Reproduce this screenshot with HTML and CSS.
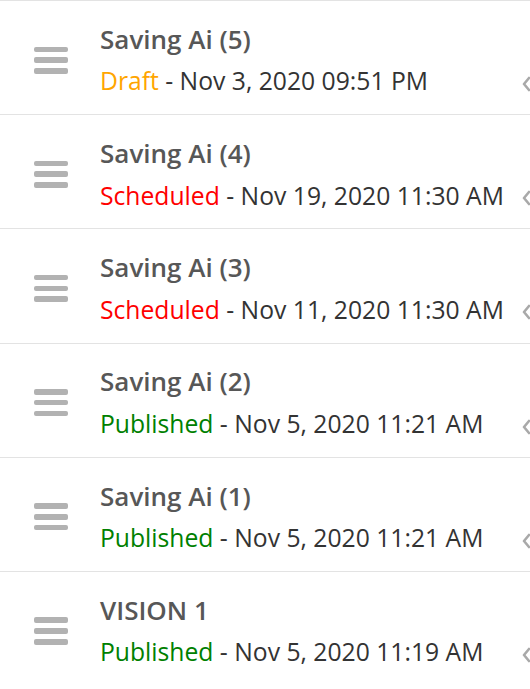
FILE: index.html
```html
<!DOCTYPE html>
<html>
<head>
<meta charset="utf-8">
<link rel="stylesheet" href="styles.css">
</head>
<body>
<ul class="list">
  <li class="row">
    <div class="handle"><span></span><span></span><span></span></div>
    <div class="info">
      <div class="title">Saving Ai (5)</div>
      <div class="meta"><span class="st draft">Draft</span> - Nov 3, 2020 09:51 PM</div>
    </div>
    <svg class="chev" width="12" height="16" viewBox="0 0 12 16"><polyline points="7,2 2,8 7,14" fill="none" stroke="#a9a9a9" stroke-width="2.6" stroke-linecap="round" stroke-linejoin="round"/></svg>
  </li>
  <li class="row">
    <div class="handle"><span></span><span></span><span></span></div>
    <div class="info">
      <div class="title">Saving Ai (4)</div>
      <div class="meta"><span class="st sched">Scheduled</span> - Nov 19, 2020 11:30 AM</div>
    </div>
    <svg class="chev" width="12" height="16" viewBox="0 0 12 16"><polyline points="7,2 2,8 7,14" fill="none" stroke="#a9a9a9" stroke-width="2.6" stroke-linecap="round" stroke-linejoin="round"/></svg>
  </li>
  <li class="row">
    <div class="handle"><span></span><span></span><span></span></div>
    <div class="info">
      <div class="title">Saving Ai (3)</div>
      <div class="meta"><span class="st sched">Scheduled</span> - Nov 11, 2020 11:30 AM</div>
    </div>
    <svg class="chev" width="12" height="16" viewBox="0 0 12 16"><polyline points="7,2 2,8 7,14" fill="none" stroke="#a9a9a9" stroke-width="2.6" stroke-linecap="round" stroke-linejoin="round"/></svg>
  </li>
  <li class="row">
    <div class="handle"><span></span><span></span><span></span></div>
    <div class="info">
      <div class="title">Saving Ai (2)</div>
      <div class="meta"><span class="st pub">Published</span> - Nov 5, 2020 11:21 AM</div>
    </div>
    <svg class="chev" width="12" height="16" viewBox="0 0 12 16"><polyline points="7,2 2,8 7,14" fill="none" stroke="#a9a9a9" stroke-width="2.6" stroke-linecap="round" stroke-linejoin="round"/></svg>
  </li>
  <li class="row">
    <div class="handle"><span></span><span></span><span></span></div>
    <div class="info">
      <div class="title">Saving Ai (1)</div>
      <div class="meta"><span class="st pub">Published</span> - Nov 5, 2020 11:21 AM</div>
    </div>
    <svg class="chev" width="12" height="16" viewBox="0 0 12 16"><polyline points="7,2 2,8 7,14" fill="none" stroke="#a9a9a9" stroke-width="2.6" stroke-linecap="round" stroke-linejoin="round"/></svg>
  </li>
  <li class="row">
    <div class="handle"><span></span><span></span><span></span></div>
    <div class="info">
      <div class="title">VISION 1</div>
      <div class="meta"><span class="st pub">Published</span> - Nov 5, 2020 11:19 AM</div>
    </div>
    <svg class="chev" width="12" height="16" viewBox="0 0 12 16"><polyline points="7,2 2,8 7,14" fill="none" stroke="#a9a9a9" stroke-width="2.6" stroke-linecap="round" stroke-linejoin="round"/></svg>
  </li>
</ul>
</body>
</html>
```
FILE: styles.css
```css
html, body {
  margin: 0;
  padding: 0;
  background: #fff;
  overflow: hidden;
}
body {
  font-family: "Open Sans", "Liberation Sans", sans-serif;
  width: 530px;
}
.list {
  list-style: none;
  margin: 0;
  padding: 0;
}
.row {
  position: relative;
  display: flex;
  align-items: center;
  border-top: 1px solid #e3e3e3;
  height: 114.2px;
  box-sizing: border-box;
  padding: 5px 0 0 34px;
}
.handle {
  width: 34px;
  display: flex;
  flex-direction: column;
  gap: 5.2px;
  flex: none;
}
.handle span {
  display: block;
  height: 5.6px;
  border-radius: 2px;
  background: #b2b2b2;
}
.info {
  margin-left: 32px;
  display: flex;
  flex-direction: column;
  gap: 6.5px;
  white-space: nowrap;
}
.title {
  font-size: 26px;
  font-weight: 600;
  line-height: 35px;
  color: #575757;
}
.meta {
  font-size: 24.7px;
  line-height: 35px;
  color: #333;
}
.st.draft { color: #ffa500; }
.st.sched { color: #ff0000; }
.st.pub { color: #008000; }
.chev {
  position: absolute;
  left: 522px;
  top: 75px;
}
```
